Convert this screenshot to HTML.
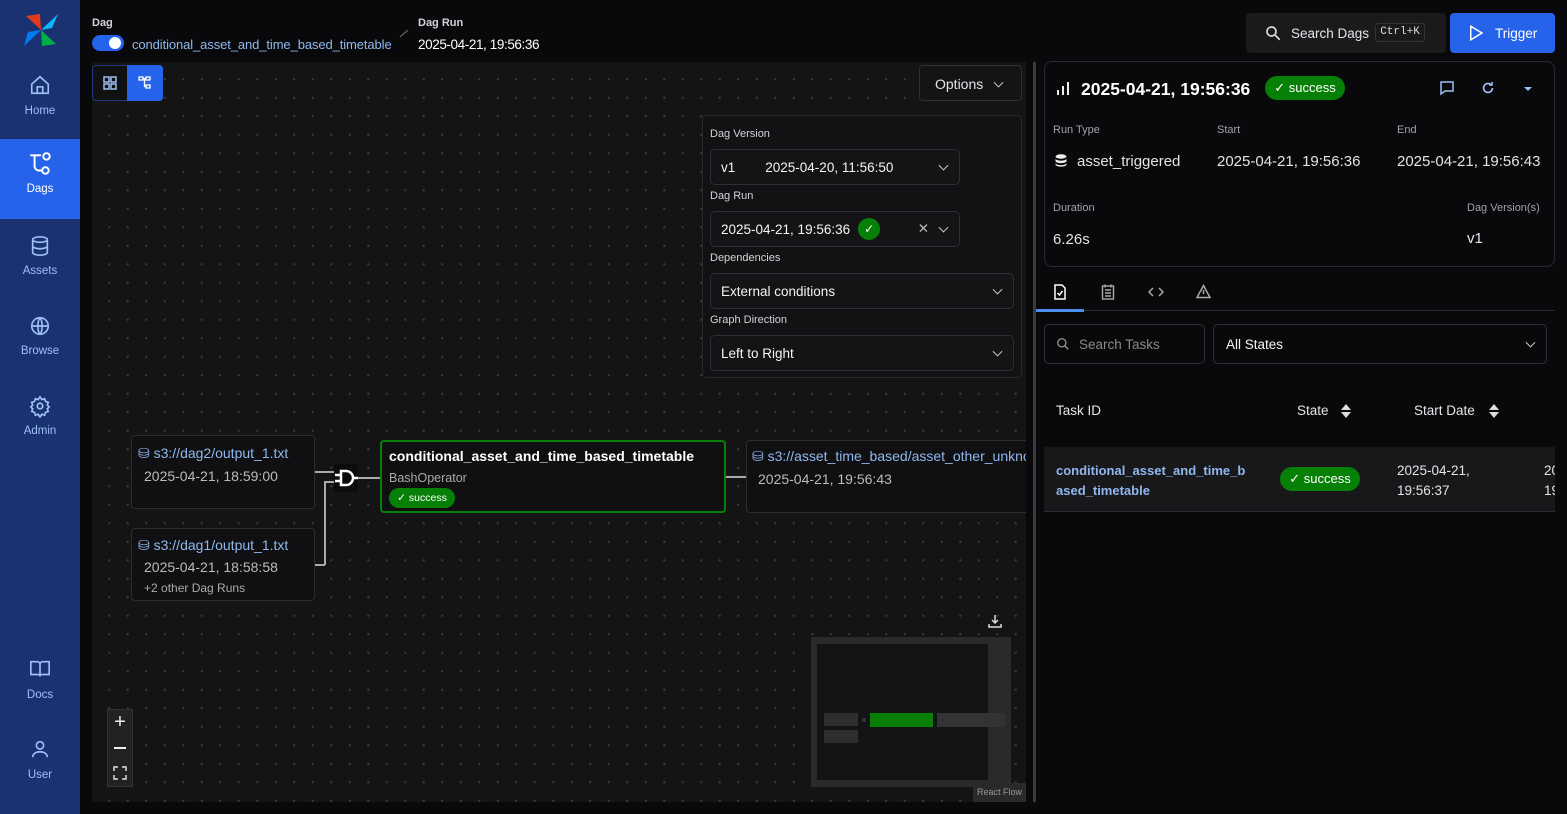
<!DOCTYPE html>
<html><head><meta charset="utf-8"><style>
*{box-sizing:border-box;margin:0;padding:0}
body{width:1567px;height:814px;background:#09090b;font-family:"Liberation Sans",sans-serif;color:#e4e4e7;position:relative;overflow:hidden;font-size:14px}
.a{position:absolute}
.side{left:0;top:0;width:80px;height:814px;background:#1a3172}
.nav{position:absolute;left:0;width:80px;height:80px;text-align:center;color:#9ec0f5;font-size:11.5px}
.nav svg{display:block;margin:15px auto 9px}
.nav.act{background:#2563eb;color:#fff}
.canvas{left:92px;top:62px;width:934px;height:740px;background-color:#141414;background-image:radial-gradient(#3a3a3a 1px,transparent 1.2px);background-size:18.5px 18.5px;background-position:8px 8px}
.lbl{font-size:11px;color:#d4d4d8}
.sel{position:absolute;border:1px solid #2e2e33;border-radius:5px;background:#141416;font-size:13.5px;color:#f4f4f5;padding:0 10px;display:flex;align-items:center}
.chev{position:absolute;right:12px;top:50%;width:7px;height:7px;border-right:1.5px solid #ccc;border-bottom:1.5px solid #ccc;transform:translateY(-70%) rotate(45deg)}
.node{position:absolute;background:#101012;border:1.5px solid #2d2d30;border-radius:4px}
.blue{color:#90b8ee}
.pill{background:#078007;color:#fff;border-radius:12px;display:inline-block}
.k{font-size:11px;color:#a1a1aa}
</style></head><body>
<div class="a side">
<svg class="a" style="left:22px;top:12px" width="38" height="36" viewBox="0 0 38 36"><path d="M19 18 L4 4 L18 2Z" fill="#e43921"/><path d="M19 18 L36 2 L30 16Z" fill="#0cb6ff"/><path d="M19 18 L34 32 L20 34Z" fill="#00ad46"/><path d="M19 18 L2 34 L6 20Z" fill="#017cee"/></svg>
<div class="nav" style="top:59px"><svg width="22" height="22" viewBox="0 0 24 24" fill="none" stroke="#9ec0f5" stroke-width="1.8"><path d="M3 11l9-8 9 8v10H3z"/><path d="M9 21v-7h6v7"/></svg>Home</div>
<div class="nav act" style="top:139px"><svg width="26" height="26" viewBox="0 0 24 24" fill="none" stroke="#fff" stroke-width="1.8" style="margin:12px auto 6px"><path d="M3 4h10M7 4v10a4 4 0 0 0 4 4h3"/><circle cx="18" cy="5" r="3"/><circle cx="17" cy="18" r="3"/></svg>Dags</div>
<div class="nav" style="top:219px"><svg width="22" height="24" viewBox="0 0 24 24" fill="none" stroke="#9ec0f5" stroke-width="1.8" style="margin:15px auto 7px"><ellipse cx="12" cy="5" rx="8" ry="3"/><path d="M4 5v14c0 1.7 3.6 3 8 3s8-1.3 8-3V5M4 12c0 1.7 3.6 3 8 3s8-1.3 8-3"/></svg>Assets</div>
<div class="nav" style="top:299px"><svg width="22" height="24" viewBox="0 0 24 24" fill="none" stroke="#9ec0f5" stroke-width="1.8" style="margin:15px auto 7px"><circle cx="12" cy="12" r="9"/><path d="M3 12h18M12 3c3 3 3 15 0 18M12 3c-3 3-3 15 0 18"/></svg>Browse</div>
<div class="nav" style="top:379px"><svg width="22" height="24" viewBox="0 0 24 24" fill="none" stroke="#9ec0f5" stroke-width="1.8" style="margin:15px auto 7px"><circle cx="12" cy="12" r="3"/><path d="M12 2l2 3 3-1 1 3 3 1-1 3 2 2-2 2 1 3-3 1-1 3-3-1-2 3-2-3-3 1-1-3-3-1 1-3-2-2 2-2-1-3 3-1 1-3 3 1z"/></svg>Admin</div>
<div class="nav" style="top:642px"><svg width="22" height="24" viewBox="0 0 24 24" fill="none" stroke="#9ec0f5" stroke-width="1.8" style="margin:15px auto 8px"><path d="M2 4h7a3 3 0 0 1 3 3v13a2 2 0 0 0-2-2H2zM22 4h-7a3 3 0 0 0-3 3v13a2 2 0 0 1 2-2h8z"/></svg>Docs</div>
<div class="nav" style="top:722px"><svg width="22" height="24" viewBox="0 0 24 24" fill="none" stroke="#9ec0f5" stroke-width="1.8" style="margin:15px auto 8px"><circle cx="12" cy="8" r="4"/><path d="M4 21c0-4 4-6 8-6s8 2 8 6"/></svg>User</div>
</div>

<div class="a lbl" style="left:92px;top:17px;font-weight:bold">Dag</div>
<div class="a" style="left:92px;top:35px;width:32px;height:16px;background:#2563eb;border-radius:8px"><div class="a" style="left:17px;top:2px;width:12px;height:12px;border-radius:6px;background:#fff"></div></div>
<div class="a blue" style="left:132px;top:37px;font-size:13px;letter-spacing:-0.1px">conditional_asset_and_time_based_timetable</div>
<div class="a" style="left:399px;top:33px;width:10px;height:1px;background:#777;transform:rotate(-40deg)"></div>
<div class="a lbl" style="left:418px;top:17px;font-weight:bold">Dag Run</div>
<div class="a" style="left:418px;top:37px;font-size:13.5px;color:#fff;letter-spacing:-0.4px">2025-04-21, 19:56:36</div>

<div class="a" style="left:1246px;top:13px;width:200px;height:40px;background:#1a1a1d;border-radius:4px"></div>
<svg class="a" style="left:1264px;top:24px" width="18" height="18" viewBox="0 0 24 24" fill="none" stroke="#ddd" stroke-width="2.2"><circle cx="10" cy="10" r="6"/><path d="M15 15l6 6"/></svg>
<div class="a" style="left:1291px;top:26px;font-size:13.5px;color:#e4e4e7">Search Dags</div>
<div class="a" style="left:1375px;top:23px;width:50px;height:19px;border:1px solid #333;border-radius:3px;font-family:'Liberation Mono',monospace;font-size:11px;text-align:center;line-height:17px;color:#ddd">Ctrl+K</div>
<div class="a" style="left:1450px;top:13px;width:105px;height:40px;background:#2563eb;border-radius:4px"></div>
<svg class="a" style="left:1467px;top:24px" width="18" height="18" viewBox="0 0 24 24" fill="none" stroke="#fff" stroke-width="2"><path d="M5 3l15 9-15 9z"/></svg>
<div class="a" style="left:1495px;top:26px;font-size:13.5px;color:#fff">Trigger</div>

<div class="a canvas"></div>
<div class="a" style="left:92px;top:65px;width:71px;height:36px;border:1px solid #1d3a80;border-radius:4px;background:#111"></div>
<div class="a" style="left:127px;top:65px;width:36px;height:36px;background:#2563eb;border-radius:0 4px 4px 0"></div>
<svg class="a" style="left:103px;top:76px" width="14" height="14" viewBox="0 0 14 14" fill="none" stroke="#9ec0f5" stroke-width="1.5"><rect x="1" y="1" width="5" height="5"/><rect x="8" y="1" width="5" height="5"/><rect x="1" y="8" width="5" height="5"/><rect x="8" y="8" width="5" height="5"/></svg>
<svg class="a" style="left:138px;top:76px" width="14" height="14" viewBox="0 0 14 14" fill="none" stroke="#fff" stroke-width="1.3"><rect x="1" y="1" width="4" height="3"/><rect x="8" y="1" width="4" height="3"/><rect x="8" y="9" width="4" height="3"/><path d="M5 2.5h3M6.5 2.5v8h1.5"/></svg>

<div class="a" style="left:919px;top:65px;width:103px;height:36px;border:1px solid #2e2e33;border-radius:4px;background:#141416;font-size:14px;color:#e4e4e7;padding:10px 0 0 15px">Options</div>
<div class="chev" style="position:absolute;left:995px;top:84px;right:auto"></div>
<div class="a" style="left:702px;top:115px;width:320px;height:263px;border:1px solid #2a2a2e;border-radius:5px;background:#121214"></div>
<div class="a lbl" style="left:710px;top:128px">Dag Version</div>
<div class="sel" style="left:710px;top:149px;width:250px;height:36px">v1<span style="margin-left:30px">2025-04-20, 11:56:50</span><i class="chev"></i></div>
<div class="a lbl" style="left:710px;top:190px">Dag Run</div>
<div class="sel" style="left:710px;top:211px;width:250px;height:36px">2025-04-21, 19:56:36<span style="margin-left:8px;width:22px;height:22px;border-radius:11px;background:#078007;display:inline-block;color:#fff;text-align:center;font-size:12px;line-height:22px">✓</span><span style="position:absolute;right:30px;color:#bbb">✕</span><i class="chev"></i></div>
<div class="a lbl" style="left:710px;top:252px">Dependencies</div>
<div class="sel" style="left:710px;top:273px;width:304px;height:36px">External conditions<i class="chev"></i></div>
<div class="a lbl" style="left:710px;top:314px">Graph Direction</div>
<div class="sel" style="left:710px;top:335px;width:304px;height:36px">Left to Right<i class="chev"></i></div>

<!-- graph -->
<div class="node" style="left:131px;top:435px;width:184px;height:74px"></div>
<div class="a blue" style="left:138px;top:445px;font-size:14px">⛁ s3://dag2/output_1.txt</div>
<div class="a" style="left:144px;top:468px;font-size:14px;color:#bbb">2025-04-21, 18:59:00</div>
<div class="node" style="left:131px;top:528px;width:184px;height:73px"></div>
<div class="a blue" style="left:138px;top:537px;font-size:14px">⛁ s3://dag1/output_1.txt</div>
<div class="a" style="left:144px;top:559px;font-size:14px;color:#bbb">2025-04-21, 18:58:58</div>
<div class="a" style="left:144px;top:581px;font-size:12px;color:#aaa">+2 other Dag Runs</div>
<div class="a" style="left:315px;top:471px;width:20px;height:1.5px;background:#aaa"></div>
<div class="a" style="left:315px;top:564px;width:10px;height:1.5px;background:#aaa"></div>
<div class="a" style="left:324px;top:481px;width:1.5px;height:84px;background:#aaa"></div>
<div class="a" style="left:324px;top:481px;width:12px;height:1.5px;background:#aaa"></div>
<div class="a" style="left:334px;top:464px;width:24px;height:28px;background:#0c0c0c;border-radius:3px"></div>
<svg class="a" style="left:334px;top:464px" width="24" height="28" viewBox="0 0 24 28" fill="none" stroke="#fff" stroke-width="2.5"><path d="M7 7h5a7 7 0 0 1 0 14H7z"/><path d="M1 11h6M1 17h6M19 14h5"/></svg>
<div class="a" style="left:358px;top:477px;width:23px;height:1.5px;background:#aaa"></div>
<div class="node" style="left:380px;top:440px;width:346px;height:73px;border:2px solid #078007"></div>
<div class="a" style="left:389px;top:448px;font-size:14px;font-weight:bold;color:#fff">conditional_asset_and_time_based_timetable</div>
<div class="a" style="left:389px;top:471px;font-size:12.5px;color:#aaa">BashOperator</div>
<div class="a pill" style="left:389px;top:488px;width:66px;height:20px;font-size:10.5px;line-height:20px;text-align:center">✓ success</div>
<div class="a" style="left:726px;top:476px;width:21px;height:1.5px;background:#aaa"></div>
<div class="a" style="left:746px;top:440px;width:280px;height:73px;overflow:hidden">
<div class="node" style="left:0;top:0;width:300px;height:73px"></div>
<div class="a blue" style="left:6px;top:8px;font-size:14px;white-space:nowrap">⛁ s3://asset_time_based/asset_other_unknown</div>
<div class="a" style="left:12px;top:31px;font-size:14px;color:#bbb">2025-04-21, 19:56:43</div>
</div>

<svg class="a" style="left:987px;top:613px" width="16" height="16" viewBox="0 0 16 16" fill="none" stroke="#ddd" stroke-width="1.5"><path d="M8 2v8M5 7l3 3 3-3M2 11v3h12v-3"/></svg>
<div class="a" style="left:811px;top:637px;width:200px;height:150px;background:#2a2a2a"></div>
<div class="a" style="left:817px;top:644px;width:171px;height:136px;background:#141414"></div>
<div class="a" style="left:824px;top:713px;width:34px;height:13px;background:#2e2e2e"></div>
<div class="a" style="left:824px;top:730px;width:34px;height:13px;background:#2e2e2e"></div>
<div class="a" style="left:862px;top:718px;width:4px;height:4px;background:#333"></div>
<div class="a" style="left:870px;top:713px;width:63px;height:14px;background:#078007"></div>
<div class="a" style="left:937px;top:713px;width:68px;height:14px;background:#333"></div>
<div class="a" style="left:973px;top:783px;width:53px;height:19px;background:#2a2a2a;color:#999;font-size:9px;line-height:19px;text-align:center">React Flow</div>
<div class="a" style="left:107px;top:709px;width:26px;height:78px;background:#222;border:1px solid #333"></div>
<div class="a" style="left:107px;top:709px;width:26px;height:26px;color:#eee;text-align:center;font-size:20px;line-height:26px">+</div>
<div class="a" style="left:114px;top:747px;width:12px;height:1.5px;background:#eee"></div>
<svg class="a" style="left:113px;top:766px" width="14" height="14" viewBox="0 0 14 14" fill="none" stroke="#ddd" stroke-width="1.5"><path d="M1 5V1h4M9 1h4v4M13 9v4H9M5 13H1V9"/></svg>

<div class="a" style="left:1033px;top:62px;width:3px;height:740px;background:#3a3a3e"></div>

<!-- right panel -->
<div class="a" style="left:1044px;top:61px;width:511px;height:206px;border:1px solid #2a2a2e;border-radius:8px"></div>
<svg class="a" style="left:1056px;top:81px" width="14" height="14" viewBox="0 0 14 14" fill="#eee"><rect x="1" y="9" width="2" height="5"/><rect x="6" y="5" width="2" height="9"/><rect x="11" y="1" width="2" height="13"/></svg>
<div class="a" style="left:1081px;top:79px;font-size:17.5px;font-weight:bold;color:#fff">2025-04-21, 19:56:36</div>
<div class="a pill" style="left:1265px;top:76px;width:80px;height:24px;font-size:13px;line-height:24px;text-align:center">✓ success</div>
<svg class="a" style="left:1439px;top:80px" width="16" height="16" viewBox="0 0 16 16" fill="none" stroke="#9ec0f5" stroke-width="1.5"><path d="M2 2h12v9H6l-4 3z"/></svg>
<svg class="a" style="left:1481px;top:81px" width="14" height="14" viewBox="0 0 14 14" fill="none" stroke="#9ec0f5" stroke-width="1.6"><path d="M11.5 7a4.5 4.5 0 1 1-1.3-3.2"/><path d="M11 1v3H8"/></svg>
<div class="a" style="left:1524px;top:87px;border:4px solid transparent;border-top-color:#9ec0f5"></div>
<div class="a k" style="left:1053px;top:124px">Run Type</div>
<div class="a k" style="left:1217px;top:124px">Start</div>
<div class="a k" style="left:1397px;top:124px">End</div>
<svg class="a" style="left:1055px;top:154px" width="12" height="13" viewBox="0 0 12 13" fill="#eee"><ellipse cx="6" cy="2.5" rx="5.5" ry="2.2"/><path d="M0.5 4.5c0 2.8 11 2.8 11 0v2.5c0 2.8-11 2.8-11 0zM0.5 9c0 2.8 11 2.8 11 0v1.5c0 2.8-11 2.8-11 0z"/></svg>
<div class="a" style="left:1077px;top:153px;font-size:15px">asset_triggered</div>
<div class="a" style="left:1217px;top:153px;font-size:15px">2025-04-21, 19:56:36</div>
<div class="a" style="left:1397px;top:153px;font-size:15px">2025-04-21, 19:56:43</div>
<div class="a k" style="left:1053px;top:202px">Duration</div>
<div class="a k" style="left:1467px;top:202px">Dag Version(s)</div>
<div class="a" style="left:1053px;top:231px;font-size:15px">6.26s</div>
<div class="a" style="left:1467px;top:230px;font-size:15px">v1</div>

<div class="a" style="left:1036px;top:310px;width:519px;height:1px;background:#2a2a2e"></div>
<div class="a" style="left:1036px;top:309px;width:48px;height:3px;background:#4a8ff0"></div>
<svg class="a" style="left:1053px;top:284px" width="14" height="16" viewBox="0 0 14 16" fill="none" stroke="#fff" stroke-width="1.5"><path d="M2 1h7l3 3v11H2z"/><path d="M4.5 9l2 2 3-4"/></svg>
<svg class="a" style="left:1101px;top:284px" width="14" height="16" viewBox="0 0 14 16" fill="none" stroke="#aaa" stroke-width="1.4"><rect x="1.5" y="2" width="11" height="13"/><path d="M4 6h6M4 9h6M4 12h6M4 0.5v3M10 0.5v3"/></svg>
<svg class="a" style="left:1148px;top:285px" width="16" height="14" viewBox="0 0 16 14" fill="none" stroke="#aaa" stroke-width="1.5"><path d="M5 3L1 7l4 4M11 3l4 4-4 4"/></svg>
<svg class="a" style="left:1196px;top:284px" width="15" height="15" viewBox="0 0 15 15" fill="none" stroke="#aaa" stroke-width="1.5"><path d="M7.5 1.5L14 13.5H1z"/><path d="M7.5 6v4"/></svg>

<div class="a" style="left:1044px;top:324px;width:161px;height:40px;border:1px solid #2e2e33;border-radius:5px"></div>
<svg class="a" style="left:1056px;top:337px" width="14" height="14" viewBox="0 0 24 24" fill="none" stroke="#999" stroke-width="2.2"><circle cx="10" cy="10" r="7"/><path d="M15 15l6 6"/></svg>
<div class="a" style="left:1079px;top:337px;font-size:13.5px;color:#888">Search Tasks</div>
<div class="sel" style="left:1213px;top:324px;width:334px;height:40px;background:transparent;padding-left:12px">All States<i class="chev"></i></div>
<div class="a" style="left:1056px;top:403px;font-size:13.5px">Task ID</div>
<div class="a" style="left:1297px;top:403px;font-size:13.5px">State</div>
<svg class="a" style="left:1340px;top:403px" width="12" height="16" viewBox="0 0 12 16" fill="#ddd"><path d="M6 1l5 6H1zM6 15l5-6H1z"/></svg>
<div class="a" style="left:1414px;top:403px;font-size:13.5px">Start Date</div>
<svg class="a" style="left:1488px;top:403px" width="12" height="16" viewBox="0 0 12 16" fill="#ddd"><path d="M6 1l5 6H1zM6 15l5-6H1z"/></svg>
<div class="a" style="left:1044px;top:447px;width:511px;height:65px;background:#18181b;border-bottom:1px solid #2a2a2e"></div>
<div class="a blue" style="left:1056px;top:461px;font-size:13px;font-weight:bold;line-height:20px">conditional_asset_and_time_b<br>ased_timetable</div>
<div class="a pill" style="left:1280px;top:467px;width:80px;height:24px;font-size:13px;line-height:24px;text-align:center">✓ success</div>
<div class="a" style="left:1397px;top:461px;font-size:13.5px;line-height:20px">2025-04-21,<br>19:56:37</div>
<div class="a" style="left:1544px;top:461px;width:11px;overflow:hidden;font-size:13.5px;line-height:20px;white-space:nowrap">20<br>19</div>
</body></html>
